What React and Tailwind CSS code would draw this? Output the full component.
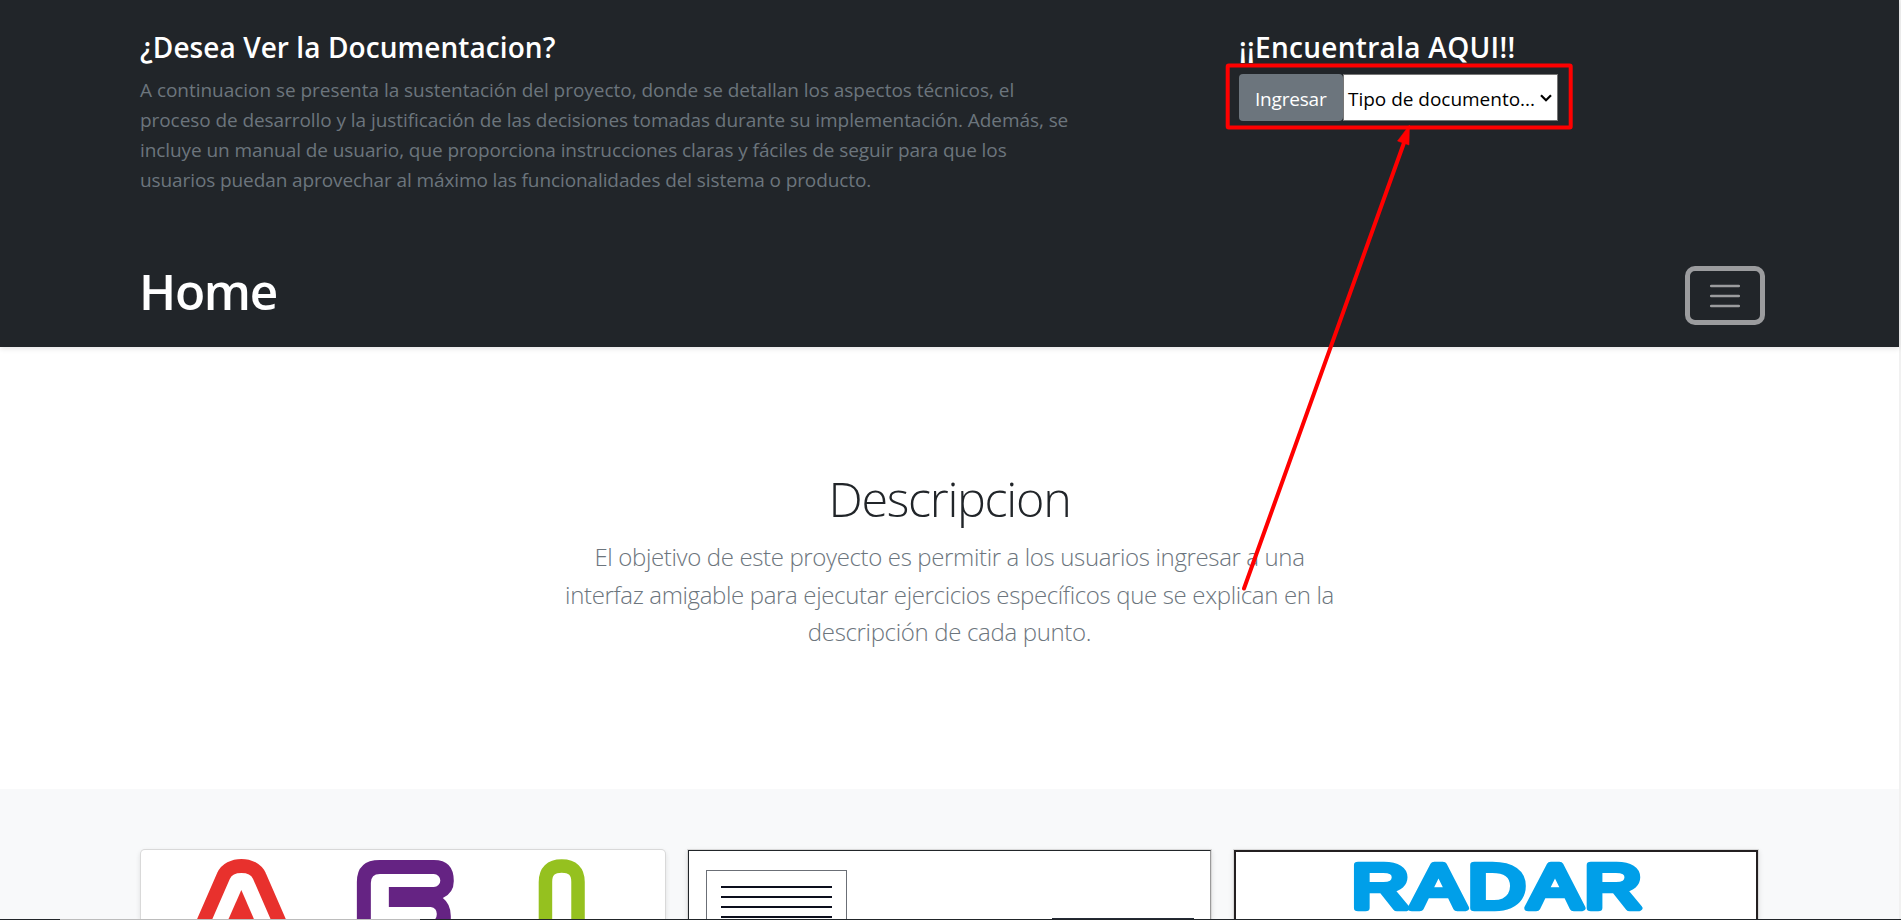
const sans = "font-['Open_Sans',sans-serif]";

function Line({ className, children }) {
  return <span className={"block w-max whitespace-nowrap " + className}>{children}</span>;
}

function Card({ className, children }) {
  return (
    <div className={"h-[70px] flex-1 border border-b-0 border-black/15 bg-white shadow-[0_2px_5px_rgba(0,0,0,0.1)] " + className}>
      {children}
    </div>
  );
}

export default function App() {
  return (
    <div className={"relative flex h-[920px] w-full overflow-hidden bg-white text-[#212529] " + sans}>
      <div className="flex min-w-0 flex-1 flex-col">
        <header className="z-10 h-[347px] shrink-0 bg-[#212529] px-[140px] shadow-[0_2px_5px_rgba(0,0,0,0.1)]">
          <div className="flex h-[240px] pt-[29px]">
            <div className="w-[1099px]">
              <h4 className="h-[46px] text-[28px] font-semibold leading-[36px] text-white">
                <Line className="tracking-[0.07px]">¿Desea Ver la Documentacion?</Line>
              </h4>
              <p className="text-[19px] leading-[30px] text-[#6c757d]">
                <Line className="tracking-[-0.035px]">A continuacion se presenta la sustentación del proyecto, donde se detallan los aspectos técnicos, el</Line>
                <Line className="tracking-[-0.07px]">proceso de desarrollo y la justificación de las decisiones tomadas durante su implementación. Además, se</Line>
                <Line className="tracking-[-0.075px]">incluye un manual de usuario, que proporciona instrucciones claras y fáciles de seguir para que los</Line>
                <Line className="tracking-[-0.1px]">usuarios puedan aprovechar al máximo las funcionalidades del sistema o producto.</Line>
              </p>
            </div>
            <div>
              <h4 className="h-[45px] text-[28px] font-semibold leading-[36px] text-white">
                <Line className="tracking-[0.3px]">¡¡Encuentrala AQUI!!</Line>
              </h4>
              <div className="flex h-[47px]">
                <button className="flex w-[104px] items-center rounded-[4px] bg-[#6c757d] pl-[16px] pt-[3px] text-[19px] text-white">
                  <Line className="tracking-[-0.2px]">Ingresar</Line>
                </button>
                <div className="flex w-[215px] items-center border border-[#767676] bg-white pl-[4px] text-[19px] text-black">
                  <div className="w-[192px] pt-[3px]">
                    <Line className="tracking-[-0.02px]">Tipo de documento...</Line>
                  </div>
                  <svg width="12" height="8" viewBox="0 0 12 8" fill="none" stroke="black" strokeWidth="2.2">
                    <path d="M1 1.2 6 6.2 11 1.2" />
                  </svg>
                </div>
              </div>
            </div>
          </div>
          <div className="flex h-[107px] items-start justify-between">
            <a className="ml-[-1px] pt-[16px] text-[49.5px] font-semibold leading-[70px] text-white">
              <Line className="tracking-[-1.3px]">Home</Line>
            </a>
            <button className="mr-[-6px] mt-[26px] flex h-[59px] w-[80px] items-center justify-center rounded-[10px] border-[5px] border-[#9b9c9e]">
              <svg width="30" height="24" viewBox="0 0 30 24" stroke="#9b9c9e" strokeWidth="2.5" strokeLinecap="round">
                <path d="M1.2 2h27.6M1.2 12h27.6M1.2 22h27.6" />
              </svg>
            </button>
          </div>
        </header>

        <section className="flex h-[442px] shrink-0 flex-col items-center bg-white pt-[121px]">
          <h1 className="text-[48.5px] font-light leading-[60px]">
            <Line className="tracking-[-1.3px]">Descripcion</Line>
          </h1>
          <p className="mt-[10px] flex flex-col items-center text-[24px] font-light leading-[37.5px] text-[#6c757d]">
            <Line className="tracking-[-0.36px]">El objetivo de este proyecto es permitir a los usuarios ingresar a una</Line>
            <Line className="tracking-[-0.35px]">interfaz amigable para ejecutar ejercicios específicos que se explican en la</Line>
            <Line className="tracking-[-0.33px]">descripción de cada punto.</Line>
          </p>
        </section>

        <section className="flex min-h-0 flex-1 gap-[21px] bg-[#f8f9fa] pl-[140px] pr-[140px] pt-[60px]">
          <Card className="rounded-t-[5px]">
            <svg className="max-w-full" width="524" height="69" viewBox="141 850 524 69" fill="none">
              <path d="M200 930 223.5 876C229 862.500 254 862.500 259.500 876L283 930" stroke="#e8312d" strokeWidth="14" />
              <path d="M241.400 890 225.500 926H257z" fill="#e8312d" />
              <path fillRule="evenodd" d="M357 925V882Q357 860 380 860H434Q454 860 454 881Q454 893 443 898Q451 904 451 916V925ZM371 925V883Q371 874 380 874H434A6.500 6.500 0 0 1 434 887H389V907H431Q437 908 437 914T431 922H389V925Z" fill="#652383" />
              <path d="M545.700 925V882Q545.700 866 562 866T578.300 882V925" stroke="#95c11f" strokeWidth="13.500" />
            </svg>
          </Card>
          <Card>
            <div className="flex h-full justify-between border-l border-r border-t border-l-[#212529] border-r-[#9a9a9a] border-t-[#212529] pl-[17px] pr-[16px]">
              <div className="mt-[19px] flex h-[49px] w-[141px] flex-col gap-[8px] border border-b-0 border-[#6b6f76] px-[14px] pt-[15px]">
                <div className="h-[2px] shrink-0 bg-[#0c0f1d]" />
                <div className="h-[2px] shrink-0 bg-[#0c0f1d]" />
                <div className="h-[2px] shrink-0 bg-[#0c0f1d]" />
                <div className="h-[2px] shrink-0 bg-[#0c0f1d]" />
              </div>
              <div className="mt-[67px] h-px w-[142px] bg-[#252b36]" />
            </div>
          </Card>
          <Card>
            <div className="h-full border-2 border-b-0 border-[#231f20]">
              <svg className="max-w-full" width="520" height="67" viewBox="1235 852 520 67">
                <text
                  transform="translate(1350.500 908) scale(1.27 1)"
                  fontFamily="Liberation Sans, sans-serif"
                  fontSize="63"
                  letterSpacing="2.1"
                  fill="#009fe9"
                  stroke="#009fe9"
                  strokeWidth="6.500"
                  strokeLinejoin="round"
                >
                  RADAR
                </text>
              </svg>
            </div>
          </Card>
        </section>
      </div>
      <div className="w-[2px] shrink-0 bg-[#f1f1f1]" />

      <div className="absolute bottom-0 left-0 z-20 flex h-px w-full bg-[#212529]">
        <div className="ml-[60px] w-[360px] bg-[#bcbcbc]" />
      </div>

      <svg className="pointer-events-none absolute left-0 top-0 z-30" width="1901" height="920" fill="none" stroke="#ff0000" strokeWidth="4">
        <rect x="1227.700" y="65.500" width="343" height="62" rx="1" />
        <path d="M1244 588.500 1405 140" strokeLinecap="round" />
        <path d="M1409.500 125 1397.500 141 1409 145z" fill="#ff0000" strokeWidth="0.500" />
      </svg>
    </div>
  );
}
